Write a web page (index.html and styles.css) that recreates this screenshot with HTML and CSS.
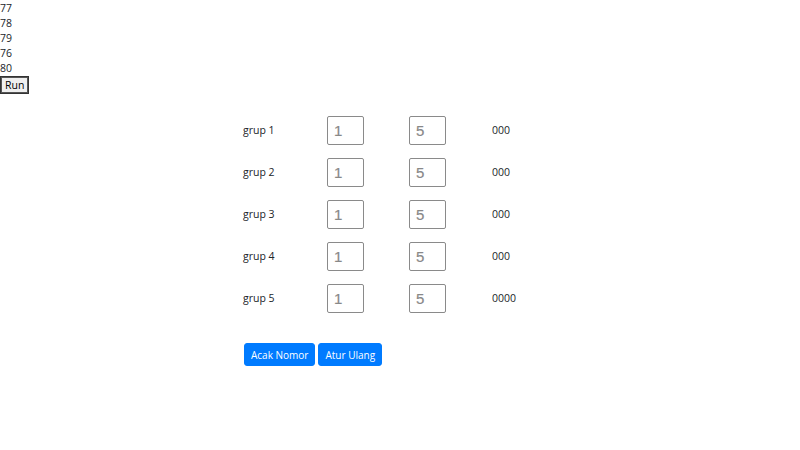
FILE: index.html
```html
<!DOCTYPE html>
<html>
<head>
<meta charset="utf-8">
<link rel="stylesheet" href="styles.css">
</head>
<body>
<div class="log">
  <div>77</div>
  <div>78</div>
  <div>79</div>
  <div>76</div>
  <div>80</div>
</div>
<button class="run">Run</button>
<div class="panel">
  <div class="grid">
    <div class="row"><span class="label">grup 1</span><input class="num" placeholder="1"><input class="num" placeholder="5"><span class="val">000</span></div>
    <div class="row"><span class="label">grup 2</span><input class="num" placeholder="1"><input class="num" placeholder="5"><span class="val">000</span></div>
    <div class="row"><span class="label">grup 3</span><input class="num" placeholder="1"><input class="num" placeholder="5"><span class="val">000</span></div>
    <div class="row"><span class="label">grup 4</span><input class="num" placeholder="1"><input class="num" placeholder="5"><span class="val">000</span></div>
    <div class="row"><span class="label">grup 5</span><input class="num" placeholder="1"><input class="num" placeholder="5"><span class="val">0000</span></div>
  </div>
  <div class="actions">
    <button class="btn">Acak Nomor</button>
    <button class="btn">Atur Ulang</button>
  </div>
</div>
</body>
</html>
```
FILE: styles.css
```css
body {
  margin: 0;
  font-family: "Open Sans", "Noto Sans", sans-serif;
  font-size: 10.5px;
  color: #212529;
  background: #fff;
}
.log {
  padding-top: 1px;
}
.log div {
  height: 15px;
  line-height: 15px;
}
.run {
  display: block;
  height: 18px;
  margin: 0;
  padding: 0 4px;
  font-family: "Open Sans", sans-serif;
  font-size: 10.5px;
  color: #000;
  background: #efefef;
  border: 1px solid #333;
  border-radius: 0;
  box-shadow: inset 0 0 0 1px #555;
}
.panel {
  width: 314px;
  margin: 15px auto 0;
}
.row {
  display: grid;
  grid-template-columns: 84px 82px 83px 65px;
  align-items: center;
  height: 42px;
}
.label, .val {
  line-height: 15px;
}
.num {
  box-sizing: border-box;
  width: 37px;
  height: 29px;
  margin: 0;
  padding: 0 6px;
  font-family: "Liberation Sans", Arial, sans-serif;
  font-size: 15px;
  border: 1px solid #8a8a8a;
  border-radius: 2px;
  color: #555;
}
.num::placeholder {
  color: #888;
  -webkit-text-stroke: 0.2px #888;
}
.actions {
  display: flex;
  gap: 3px;
  margin-top: 24px;
  padding-left: 1px;
}
.btn {
  height: 23px;
  padding: 0 6px;
  font-family: "Open Sans", sans-serif;
  font-size: 10px;
  color: #fff;
  background: #007bff;
  border: 1px solid #007bff;
  border-radius: 3px;
}
```
